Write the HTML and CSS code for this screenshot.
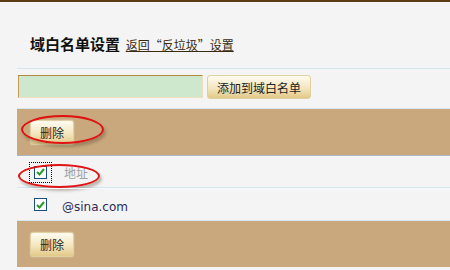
FILE: index.html
```html
<!DOCTYPE html>
<html lang="zh-CN">
<head>
    <meta charset="UTF-8">
    <title>域白名单设置</title>
    <link rel="stylesheet" href="styles.css">
</head>
<body>

<div class="wrap">
    <div class="header">
        <span class="title">域白名单设置</span>
        <a class="back" href="#">返回“反垃圾”设置</a>
    </div>

    <div class="add-row">
        <input type="text" class="domain-input">
        <button class="btn">添加到域白名单</button>
    </div>

    <div class="band">
        <button class="btn">删除</button>
        <span class="mark mark-btn"></span>
    </div>

    <div class="list">
        <div class="row head">
            <span class="focus"><span class="check"><svg width="9" height="8" viewBox="0 0 9 8"><path d="M1 4 L3.5 6.5 L8 1" fill="none" stroke="#2a9a2a" stroke-width="2"/></svg></span></span>
            <span class="addr">地址</span>
            <span class="mark mark-head"></span>
        </div>
        <div class="row">
            <span class="nofocus"><span class="check"><svg width="9" height="8" viewBox="0 0 9 8"><path d="M1 4 L3.5 6.5 L8 1" fill="none" stroke="#2a9a2a" stroke-width="2"/></svg></span></span>
            <span class="domain">@sina.com</span>
        </div>
    </div>

    <div class="band">
        <button class="btn">删除</button>
    </div>
</div>

</body>
</html>
```

FILE: styles.css
```css
body { margin: 0; background: #f4f4f4; border-top: 2px solid #5b3c12; font-family: "Noto Sans CJK SC", sans-serif; font-size: 12px; color: #222; }
.wrap { margin-left: 17px; }
.header { height: 67px; box-sizing: border-box; padding: 32px 0 0 13px; line-height: 20px; border-bottom: 1px solid #d4e5f2; }
.title { font-size: 15px; font-weight: bold; color: #111; margin-right: 3px; }
.back { color: #3a2a10; text-decoration: underline; font-size: 12px; }
.add-row { height: 40px; box-sizing: border-box; padding: 6px 0 0 1px; display: flex; gap: 4px; border-bottom: 1px solid #d4e5f2; }
.domain-input { width: 185px; height: 23px; box-sizing: border-box; margin: 0; padding: 2px 4px; background: #cde8cc; border: 1px solid #f0dfbf; border-top-color: #b08a3c; border-left-color: #c09a55; outline: none; }
.btn { height: 24px; padding: 0 9px; margin: 0; border: 1px solid #e0cfa0; border-radius: 3px; background: linear-gradient(#fefbf0, #f3e6bf 55%, #e2c988); font-family: "Noto Sans CJK SC", sans-serif; font-size: 12px; color: #222; box-shadow: 0 0 1px #fff; }
.band { position: relative; height: 46px; box-sizing: border-box; padding: 11px 0 0 13px; background: #c8a87c; }
.band .btn { height: 25px; }
.list { border-top: 1px solid #aab4c4; border-bottom: 1px solid #d4e5f2; }
.row { position: relative; display: flex; align-items: center; height: 32px; box-sizing: border-box; border-top: 1px solid #f8f8f8; }
.row.head { border-bottom: 1px solid #d4e5f2; }
.focus { display: inline-flex; padding: 3px 4px; margin-left: 12px; border: 1px dotted #000; }
.nofocus { display: inline-flex; padding: 4px 5px; margin-left: 12px; }
.check { display: inline-flex; align-items: center; justify-content: center; width: 13px; height: 13px; box-sizing: border-box; border: 1px solid #1c4f80; background: #fff; }
.addr { margin-left: 12px; color: #a0a0a0; }
.domain { margin-left: 10px; padding-top: 4px; font-family: "DejaVu Sans", sans-serif; font-size: 12px; color: #2c2a5a; }
.mark { position: absolute; border: 2px solid #e01212; border-radius: 50%; box-shadow: 2px 3px 3px rgba(80, 70, 50, 0.35); box-sizing: border-box; }
.mark-btn { left: 4px; top: 6px; width: 83px; height: 29px; }
.mark-head { left: 1px; top: 7px; width: 82px; height: 24px; }
```
